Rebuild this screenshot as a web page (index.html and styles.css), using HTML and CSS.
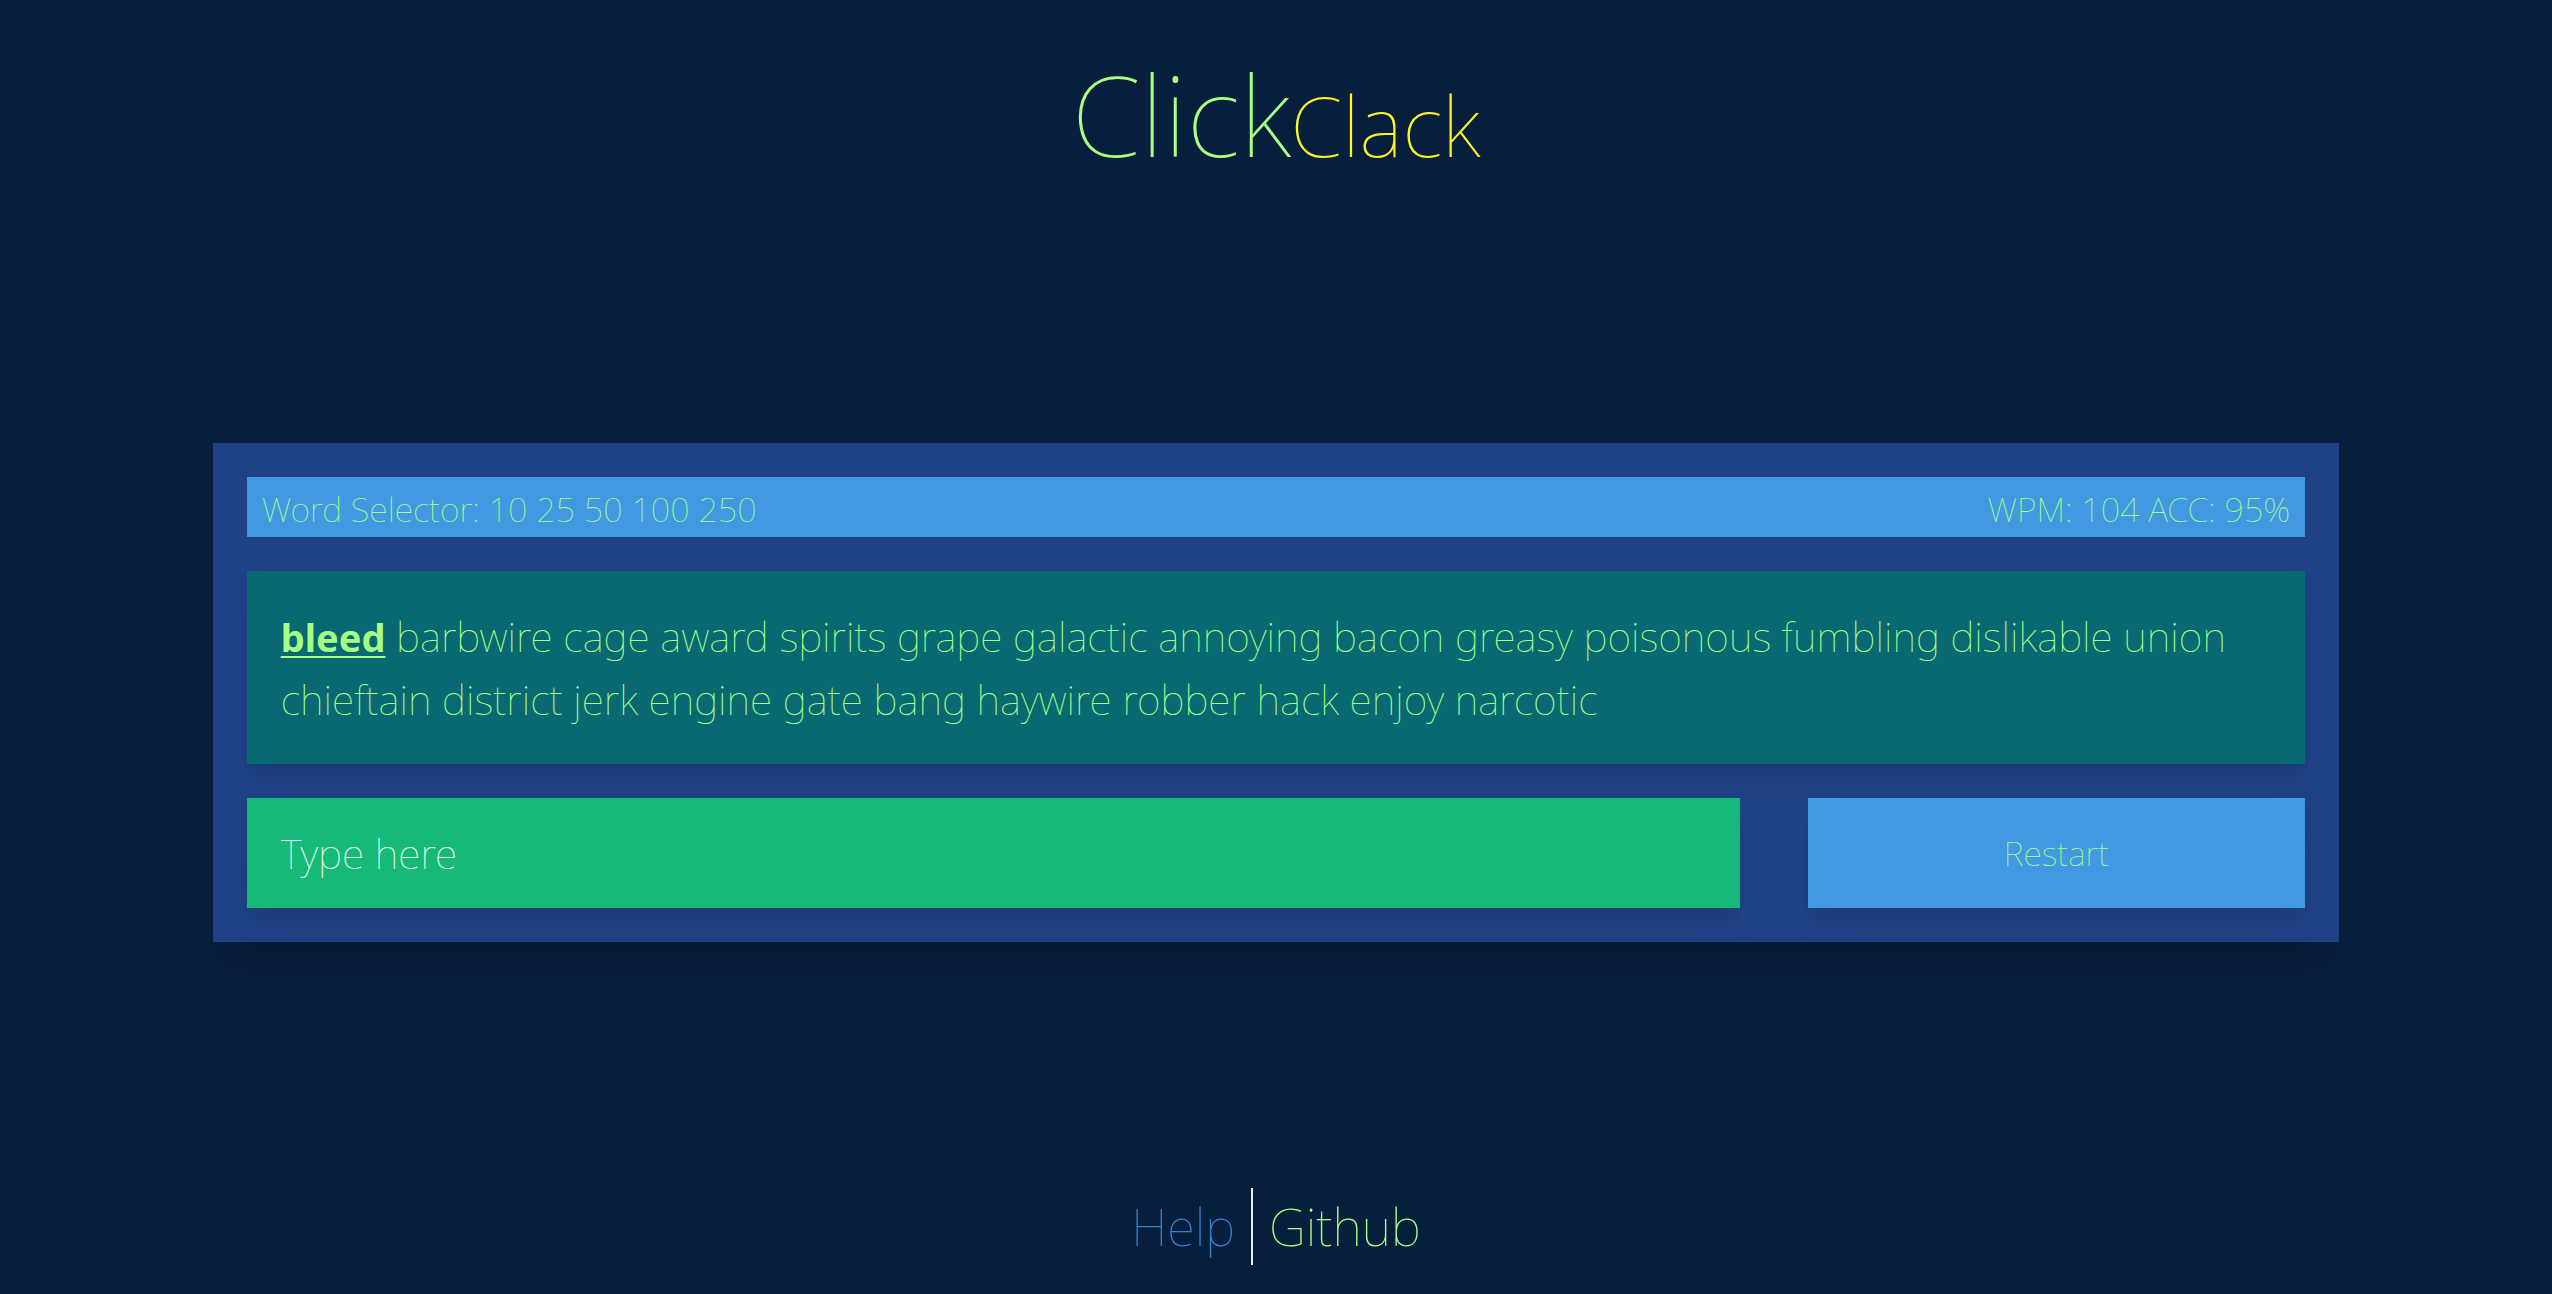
FILE: index.html
```html
<!DOCTYPE html>
<html lang="en">
<head>
<meta charset="utf-8">
<meta name="viewport" content="width=device-width, initial-scale=1">
<title>ClickClack</title>
<link rel="stylesheet" href="styles.css">
</head>
<body>
<header class="header">
  <h1 class="title">Click<span class="title-accent">Clack</span></h1>
</header>
<main class="main">
  <section class="panel">
    <div class="bar">
      <p>Word Selector: <span>10</span> <span>25</span> <span>50</span> <span>100</span> <span>250</span></p>
      <p>WPM: 104 ACC: 95%</p>
    </div>
    <p class="words"><span class="current">bleed</span> barbwire cage award spirits grape galactic annoying bacon greasy poisonous fumbling dislikable union chieftain district jerk engine gate bang haywire robber hack enjoy narcotic</p>
    <div class="controls">
      <input class="entry" type="text" placeholder="Type here" aria-label="Type here">
      <button class="restart" type="button">Restart</button>
    </div>
  </section>
</main>
<footer class="footer">
  <a class="link help" href="#help">Help</a>
  <a class="link github" href="#github">Github</a>
</footer>
</body>
</html>
```
FILE: styles.css
```css
* {
  box-sizing: border-box;
  margin: 0;
}

body {
  min-height: 100vh;
  display: grid;
  grid-template-rows: auto 1fr auto;
  background: #071e3d;
  color: #a7ff83;
  font-family: "Noto Sans", "Open Sans", sans-serif;
  font-weight: 100;
}

.header {
  padding: 44px 0 2px;
  text-align: center;
}

.title {
  font-size: 112px;
  line-height: 140px;
  font-weight: 100;
}

.title-accent {
  color: #fcf51f;
  font-size: 84px;
}

.main {
  display: flex;
  align-items: center;
  justify-content: center;
}

.panel {
  width: 83.3333%;
  padding: 34px;
  display: flex;
  flex-direction: column;
  gap: 34px;
  background: #1f4287;
  box-shadow: 0 40px 50px -10px rgba(0, 0, 0, 0.1), 0 20px 20px -10px rgba(0, 0, 0, 0.04);
}

.bar {
  display: flex;
  justify-content: space-between;
  padding: 8px 15px 4px;
  background: #4299e1;
  font-size: 34px;
  line-height: 48px;
}

.words {
  padding: 34px;
  background: #086972;
  font-size: 41px;
  line-height: 62px;
  box-shadow: 0 20px 30px -6px rgba(0, 0, 0, 0.1), 0 8px 12px -4px rgba(0, 0, 0, 0.05);
}

.current {
  font-size: 38px;
  font-weight: 700;
  text-decoration: underline 2px;
  text-underline-offset: 4px;
}

.controls {
  display: grid;
  grid-template-columns: 3fr 1fr;
  gap: 68px;
}

.entry,
.restart {
  min-width: 0;
  height: 110px;
  border: 0;
  border-radius: 0;
  font-family: inherit;
  font-weight: inherit;
  box-shadow: 0 20px 30px -6px rgba(0, 0, 0, 0.1), 0 8px 12px -4px rgba(0, 0, 0, 0.05);
}

.entry {
  padding: 0 34px;
  background: #17b978;
  color: #fff;
  font-size: 41px;
}

.entry::placeholder {
  color: #e2ffee;
  opacity: 1;
}

.restart {
  padding: 0;
  background: #4299e1;
  color: inherit;
  font-size: 34px;
}

.footer {
  display: flex;
  justify-content: center;
  padding-bottom: 29px;
  font-size: 51px;
  line-height: 77px;
}

.link {
  color: inherit;
  padding: 0 16px;
  text-decoration: none;
}

.help {
  color: #3182ce;
  border-right: 2px solid #edf2f7;
}
```
